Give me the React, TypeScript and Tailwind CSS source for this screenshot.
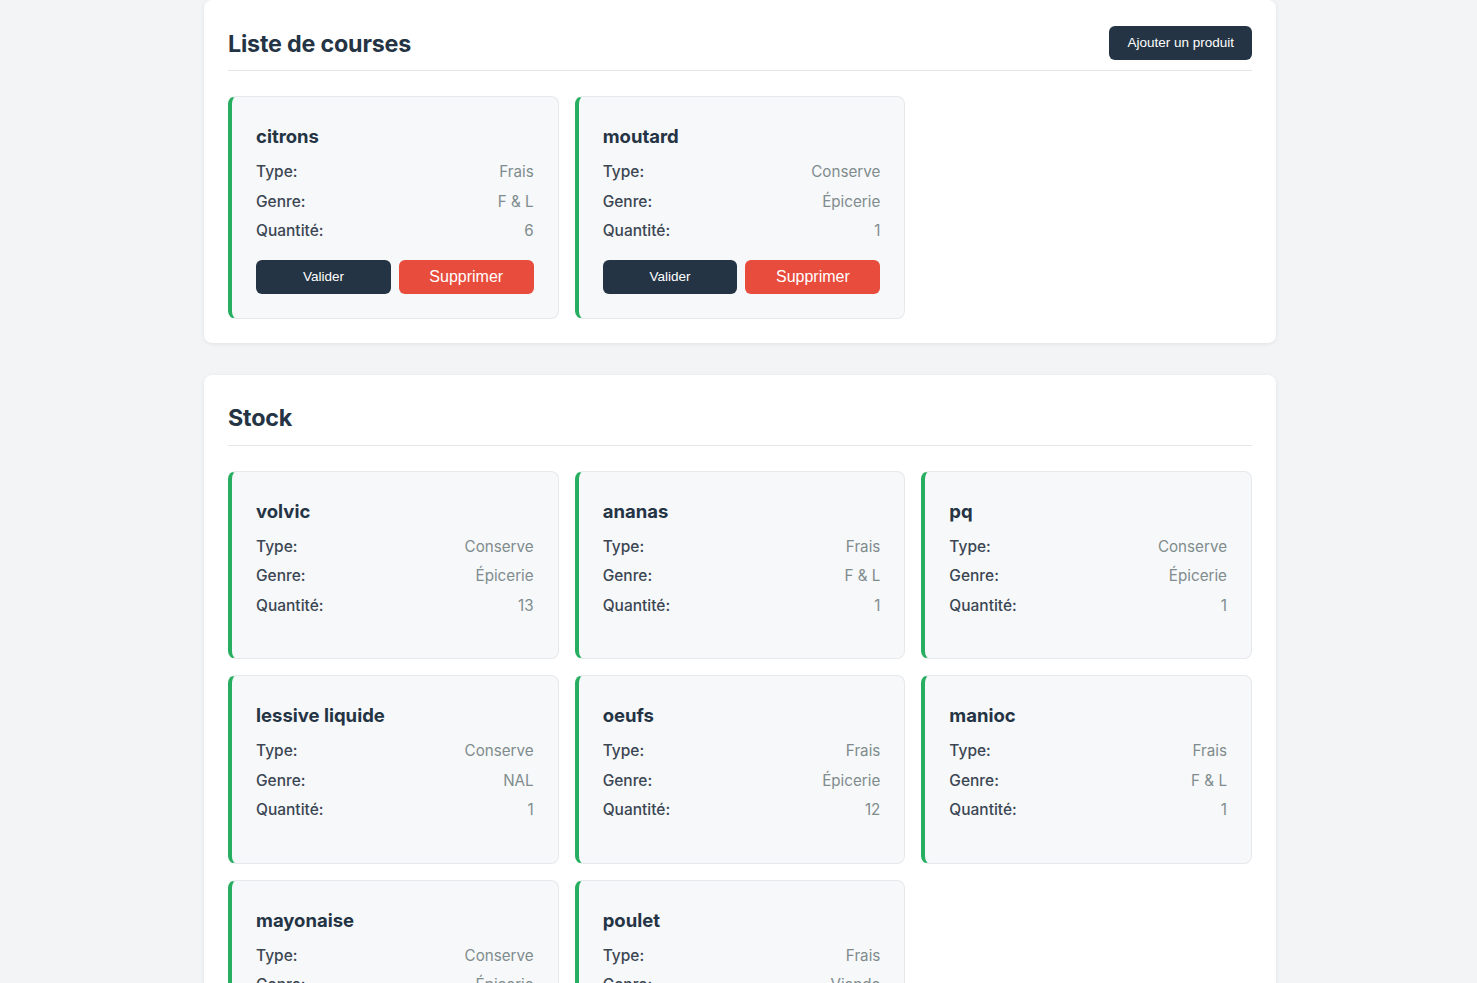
type Product = {
  name: string;
  type: string;
  genre: string;
  quantite: number;
};

const courses: Product[] = [
  { name: "citrons", type: "Frais", genre: "F & L", quantite: 6 },
  { name: "moutard", type: "Conserve", genre: "Épicerie", quantite: 1 },
];

const stock: Product[] = [
  { name: "volvic", type: "Conserve", genre: "Épicerie", quantite: 13 },
  { name: "ananas", type: "Frais", genre: "F & L", quantite: 1 },
  { name: "pq", type: "Conserve", genre: "Épicerie", quantite: 1 },
  { name: "lessive liquide", type: "Conserve", genre: "NAL", quantite: 1 },
  { name: "oeufs", type: "Frais", genre: "Épicerie", quantite: 12 },
  { name: "manioc", type: "Frais", genre: "F & L", quantite: 1 },
  { name: "mayonaise", type: "Conserve", genre: "Épicerie", quantite: 1 },
  { name: "poulet", type: "Frais", genre: "Viande", quantite: 2 },
];

function Row({ label, value }: { label: string; value: string | number }) {
  return (
    <div className="flex justify-between items-center leading-[29.5px]">
      <span className="font-medium text-[15.5px] text-[#3b4653]">{label}</span>
      <span className="text-[15.2px] text-[#7f8c8d]">{value}</span>
    </div>
  );
}

function ProductCard({ product, withActions }: { product: Product; withActions?: boolean }) {
  return (
    <div className="bg-[#f7f8fa] border border-[#e6e8eb] border-l-4 border-l-[#27ae60] rounded-lg px-6 pt-6 pb-6">
      <h3 className="text-[18.5px] leading-[30px] font-bold text-[#253444] mb-[6px]">{product.name}</h3>
      <Row label="Type:" value={product.type} />
      <Row label="Genre:" value={product.genre} />
      <Row label="Quantité:" value={product.quantite} />
      {withActions ? (
        <div className="grid grid-cols-2 gap-2 mt-[14px] font-['Liberation_Sans',Arial,sans-serif]">
          <button className="h-[34px] pt-[2px] rounded-md bg-[#253444] text-white text-[13.5px]">Valider</button>
          <button className="h-[34px] rounded-md bg-[#e74c3c] text-white text-[16px]">Supprimer</button>
        </div>
      ) : (
        <div className="h-[14px]" />
      )}
    </div>
  );
}

function Panel({
  title,
  action,
  children,
}: {
  title: string;
  action?: React.ReactNode;
  children: React.ReactNode;
}) {
  return (
    <section className="bg-white rounded-lg shadow-[0_1px_4px_rgba(0,0,0,0.08)] px-6 pt-[26px] pb-6">
      <div className="pb-[10px] border-b border-[#e5e7eb] mb-[25px]">
        <div className="flex items-center justify-between min-h-[34px]">
          <h2 className="text-[23.3px] leading-[32px] font-bold text-[#253444] tracking-[-0.2px] pt-[1px]">{title}</h2>
          {action}
        </div>
      </div>
      {children}
    </section>
  );
}

export default function App() {
  return (
    <div className="min-h-screen bg-[#f3f4f6] font-['Inter','Noto_Sans',sans-serif]">
      <div className="flex justify-center pl-[3px]">
        <div className="w-[1072px] flex flex-col gap-8 pb-10">
          <Panel
            title="Liste de courses"
            action={
              <button className="h-[34px] px-[18px] rounded-md bg-[#253444] text-white text-[13.5px] font-['Liberation_Sans',Arial,sans-serif]">
                Ajouter un produit
              </button>
            }
          >
            <div className="grid grid-cols-3 gap-4">
              {courses.map((p) => (
                <ProductCard key={p.name} product={p} withActions />
              ))}
            </div>
          </Panel>

          <Panel title="Stock">
            <div className="grid grid-cols-3 gap-4">
              {stock.map((p) => (
                <ProductCard key={p.name} product={p} />
              ))}
            </div>
          </Panel>
        </div>
      </div>
    </div>
  );
}
